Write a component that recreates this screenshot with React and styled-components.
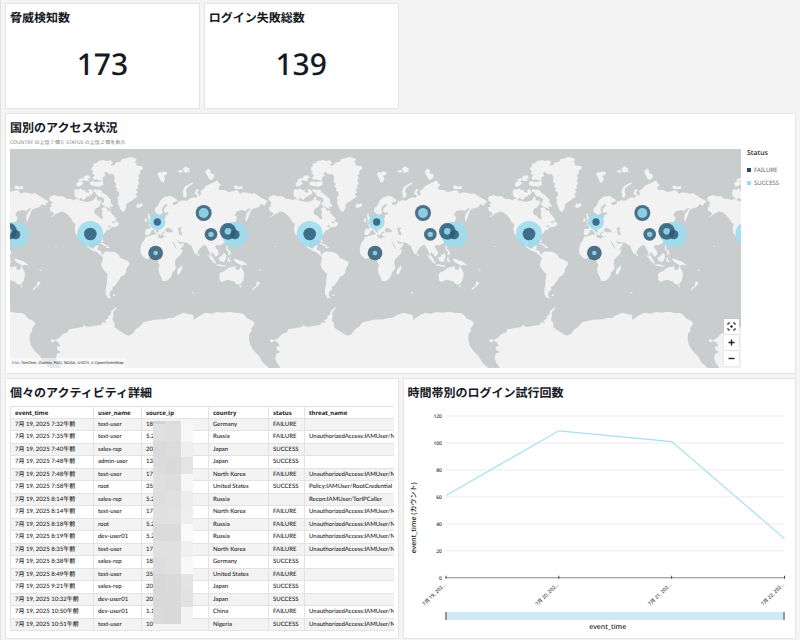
import React from 'react';
import styled, { createGlobalStyle } from 'styled-components';

const GlobalStyle = createGlobalStyle`
  * {
    box-sizing: border-box;
  }

  body {
    margin: 0;
    background: #f4f4f4;
    color: #16191f;
    font-family: 'Noto Sans', 'Noto Sans CJK JP', sans-serif;
    text-rendering: geometricPrecision;
  }
`;

const Dashboard = styled.main`
  display: grid;
  grid-template-columns: repeat(4, minmax(0, 1fr));
  gap: 4px;
  padding: 3px 4px 3px 4px;
  border-left: 1px solid #e2e2e2;
`;

const Panel = styled.section`
  grid-column: span ${(props) => props.$span};
  min-height: ${(props) => props.$height}px;
  padding: 4px 4px 5px;
  border: 1px solid #e4e4e4;
  background: #fff;
`;

const Title = styled.h2`
  margin: 0;
  font-family: 'Noto Sans CJK JP', sans-serif;
  font-size: 12px;
  font-weight: 700;
  line-height: 20px;
  white-space: nowrap;
`;

const Subtitle = styled.p`
  margin: 0 0 1px;
  color: #777;
  font-size: 5px;
  line-height: 10px;
`;

const KpiValue = styled.p`
  margin: 16px 0 0;
  font-size: 30px;
  font-weight: 500;
  line-height: 40px;
  text-align: center;
`;

const MapRow = styled.div`
  display: flex;
`;

const MapFrame = styled.div`
  position: relative;
  flex: 1;
  min-width: 0;
  height: 219px;
  overflow: hidden;
  background: #c9cdce;
`;

const MapSvg = styled.svg`
  display: block;
  width: 100%;
  height: 100%;
`;

const MapControls = styled.div`
  position: absolute;
  right: 2px;
  bottom: 2px;
  display: grid;
  gap: 1px;
`;

const MapButton = styled.button`
  display: grid;
  place-items: center;
  width: 15px;
  height: 15px;
  padding: 0;
  border: 0;
  background: #fff;
  box-shadow: 0 0 1px #bbb;
  color: #222;
`;

const Attribution = styled.div`
  position: absolute;
  left: 0;
  bottom: 0;
  padding: 0 2px;
  background: rgba(255, 255, 255, 0.5);
  color: #222;
  font-family: 'Liberation Sans', sans-serif;
  font-size: 4px;
  line-height: 10px;

  a {
    color: #0079c1;
    text-decoration: none;
  }
`;

const Legend = styled.div`
  width: 50px;
  padding-left: 6px;
  color: #666;
  font-size: 6px;

  h3 {
    margin: 0 0 5px;
    color: #222;
    font-size: 7px;
    font-weight: 500;
    line-height: 9px;
  }

  ul {
    margin: 0;
    padding: 0;
    list-style: none;
  }

  li {
    display: flex;
    align-items: center;
    gap: 3px;
    height: 13px;
  }
`;

const Swatch = styled.span`
  width: 4px;
  height: 4px;
  background: ${(props) => props.$color};
`;

const TableFrame = styled.div`
  position: relative;
  margin-top: 3px;
  overflow: hidden;
`;

const ActivityTable = styled.table`
  width: 100%;
  border-collapse: collapse;
  table-layout: fixed;
  color: #222;
  font-family: Lato, 'Noto Sans CJK JP', sans-serif;
  font-size: 6px;
  font-weight: 500;
  line-height: 8px;

  th,
  td {
    height: 12px;
    padding: 0 0 0 4px;
    overflow: hidden;
    border: 1px solid #e3e3e3;
    border-right: 0;
    text-align: left;
    white-space: nowrap;
  }

  th {
    font-family: 'Noto Sans', sans-serif;
    font-weight: 700;
  }

  tbody tr:nth-child(odd) {
    background: #f3f3f3;
  }

  tbody tr:nth-child(even) td {
    height: 13px;
  }
`;

const Mosaic = styled.div`
  position: absolute;
  top: 15px;
  left: 143px;
  display: grid;
  grid-template-columns: 12px 16px 12px;
  grid-template-rows: 3px repeat(12, 1fr);
  width: 40px;
  height: 203px;
`;

const MosaicCell = styled.span`
  background: ${(props) => props.$color};
`;

const ChartSvg = styled.svg`
  display: block;
  width: 100%;
`;

const RangeBar = styled.div`
  display: flex;
  justify-content: space-between;
  height: 8px;
  margin: 4px 6px 0 37px;
  background: #cfe8f3;
`;

const RangeHandle = styled.button`
  width: 2px;
  height: 8px;
  padding: 0;
  border: 1px solid #8b9aa1;
  background: #cfe8f3;
`;

const AxisTitle = styled.p`
  margin: 3px 6px 0 23px;
  color: #222;
  font-size: 7px;
  font-weight: 500;
  line-height: 10px;
  text-align: center;
`;

const FAILURE = '#2d5a76';
const SUCCESS = '#9adcf0';

// one world copy, repeated every WORLD units along the map
const WORLD = 658;

const land = [
  // north america
  'M150 183L147 176L153 170L165 166L174 170L190 170L198 177L212 178L221 182L228 177L238 182L250 185L262 187L274 184L282 180L285 172L290 171L291 180L298 184L304 182L303 192L296 194L298 202L288 206L283 213L284 223L293 228L301 236L306 240L309 232L306 224L308 214L304 207L312 202L319 205L324 214L330 212L335 222L344 231L350 239L342 246L335 246L338 251L348 251L355 256L349 261L340 262L334 263L327 270L319 272L314 280L309 287L307 294L310 308L306 308L300 300L288 301L274 302L267 310L270 323L280 327L286 318L295 317L292 331L302 333L305 344L313 348L307 351L298 344L291 338L275 331L258 320L247 303L238 293L244 308L239 304L232 288L226 279L224 266L227 253L219 248L214 237L204 225L193 218L183 215L176 220L168 222L159 230L150 234L163 223L158 218L150 213L149 203L157 199L151 194L158 189Z',
  // south america
  'M306 349L311 341L319 335L328 336L340 336L347 339L356 345L361 354L371 359L379 362L388 368L387 376L380 386L378 398L372 407L362 411L358 420L350 430L345 438L337 442L338 450L331 455L328 466L331 473L336 476L324 475L317 464L317 449L320 436L321 418L323 402L314 395L307 384L303 374L307 364L309 356Z',
  // greenland
  'M322 90L331 83L328 79L343 76L349 68L361 66L366 58L380 56L388 52L401 54L410 59L404 68L411 70L407 76L418 79L426 79L430 86L421 92L420 102L414 108L419 115L414 121L418 132L412 139L416 145L408 151L414 158L406 163L412 171L402 177L394 184L386 188L379 194L378 204L374 214L368 217L361 209L357 199L353 189L355 180L352 174L358 167L357 157L349 153L352 146L345 140L350 133L343 127L344 112L340 104L327 104L320 98Z',
  // ellesmere and the arctic islands
  'M276 83L282 78L278 73L289 70L296 64L310 61L320 64L332 62L338 69L332 76L336 83L325 87L319 97L312 100L317 108L308 113L309 123L297 122L288 118L285 122L278 116L284 107L275 101L281 94L274 91Z',
  'M270 128L278 124L286 127L309 125L310 135L298 141L282 139L272 137Z',
  'M254 108L266 107L271 114L263 119L269 124L257 124L248 120Z',
  'M228 132L237 124L247 126L250 132L241 139L232 141Z',
  'M236 119L247 115L252 121L244 125L236 123Z',
  'M223 154L226 148L235 150L243 146L248 152L257 150L255 157L266 159L269 170L260 171L252 181L243 174L235 181L229 173L223 169Z',
  'M266 148L275 150L279 158L273 168L267 163Z',
  'M279 150L290 148L288 156L281 158Z',
  'M285 155L297 149L305 153L308 159L318 165L325 172L333 180L331 187L338 195L339 202L329 200L332 209L320 203L313 200L304 192L311 188L313 178L304 172L294 170L289 164Z',
  'M284 191L290 187L299 190L301 198L293 201L286 198Z',
  // iceland, newfoundland, antilles, hawaii
  'M408 198L413 196L410 191L418 193L426 190L429 197L423 202L414 205L409 202Z',
  'M343 251L347 243L350 247L357 249L355 256L347 255Z',
  'M296 311L307 310L319 316L326 320L313 318L306 314Z',
  'M316 321L324 320L330 324L321 326Z',
  'M167 318L170 319L169 322L166 321Z',
  'M340 464L347 465L343 469L338 468Z',
  // africa
  'M437 292L449 288L468 284L474 286L474 292L485 297L492 292L512 294L517 299L515 303L521 312L527 323L535 332L549 329L544 343L534 352L526 361L525 373L528 384L523 393L517 398L516 406L509 417L500 424L487 424L484 413L478 402L475 388L479 375L474 367L473 358L465 355L453 355L439 358L431 353L422 341L421 332L423 318L428 307L433 301Z',
  'M534 388L541 383L544 376L547 384L541 399L535 405L531 400Z',
  // europe, asia
  'M436 286L435 278L438 267L450 268L451 260L445 256L449 253L457 250L463 242L469 239L469 228L475 227L474 234L484 238L496 236L497 226L506 224L504 218L496 219L491 215L493 206L503 196L498 192L488 203L485 212L489 218L483 224L480 232L475 227L469 219L464 216L465 206L474 198L480 183L492 173L503 170L512 168L524 176L532 181L529 186L519 188L518 194L525 197L533 192L537 181L540 187L546 182L561 183L571 176L580 173L590 174L592 167L584 163L587 153L592 147L597 151L592 158L598 169L604 164L601 153L610 149L617 139L631 132L645 126L653 122L656 130L663 135L655 145L660 151L674 151L686 157L701 154L709 151L717 156L719 163L730 158L745 160L755 163L762 160L771 165L784 174L799 182L804 187L797 190L794 198L783 193L778 201L770 204L757 208L752 213L748 225L740 245L736 235L741 220L753 205L743 207L738 214L725 211L711 215L704 225L711 234L706 248L697 258L688 263L694 274L689 280L684 273L679 271L681 279L686 286L683 300L673 309L661 317L650 316L645 321L654 333L657 342L648 352L642 344L635 336L633 345L640 354L646 366L639 361L631 350L628 336L622 325L617 317L610 317L600 326L594 335L592 343L586 344L579 332L575 318L568 315L560 309L545 308L534 304L540 312L551 311L552 316L540 330L519 339L515 331L506 315L500 299L501 292L491 290L486 282L495 279L491 275L486 280L481 288L476 281L477 273L466 267L468 275L479 283L473 286L467 279L461 271L455 271L452 279L446 286Z',
  'M443 222L449 222L447 229L453 235L458 247L441 251L448 243L445 237Z',
  'M434 238L441 236L441 245L434 247Z',
  'M472 103L479 96L484 99L491 95L502 98L499 106L490 108L496 117L490 129L483 126L478 114Z',
  'M534 94L543 91L550 94L545 99L536 98Z',
  'M548 88L556 80L570 87L566 92L571 98L560 97L556 101Z',
  'M550 173L550 162L548 155L554 141L566 134L579 128L578 133L567 139L559 147L558 156L561 164L558 174Z',
  'M617 93L626 86L632 94L631 101L642 104L643 113L634 121L627 119L623 108L618 103Z',
  'M700 141L707 137L716 141L727 139L728 147L712 149L704 147Z',
  'M739 222L744 218L745 230L740 246L737 243Z',
  'M592 343L598 343L597 349L594 349Z',
  // south east asia, oceania
  'M620 343L629 349L637 357L647 366L649 373L641 369L630 356Z',
  'M646 375L658 374L671 377L680 378L676 381L656 379Z',
  'M655 355L664 350L672 340L679 346L677 358L672 367L661 365Z',
  'M683 355L697 351L687 356L693 368L688 368L685 362L682 371Z',
  'M678 318L683 318L682 327L690 333L693 344L684 346L686 336L679 330Z',
  'M700 357L710 358L717 362L729 365L739 373L743 378L731 375L724 378L717 373L709 369L703 363Z',
  'M658 405L661 399L673 394L686 384L699 381L708 380L706 387L715 392L720 386L722 378L728 390L733 399L732 411L729 423L720 435L709 433L701 424L696 425L688 420L678 422L666 427L659 422Z',
  'M718 438L725 437L722 444Z',
  'M771 425L777 427L780 431L773 438L760 450L756 453L758 446L768 438Z',
  'M777 388L784 392L782 394L776 390Z',
  'M575 457L582 458L581 461L576 460Z',
  // antarctica
  'M184 686L172 668L168 656L171 642L183 637L173 631L170 622L181 618L174 607L164 603L158 609L151 603L156 598L164 602L178 594L188 583L203 578L206 569L226 566L248 562L251 556L264 562L285 558L303 556L307 548L319 549L315 541L325 537L324 529L332 525L334 514L350 501L348 509L339 517L340 530L337 541L344 550L344 563L356 572L374 583L385 588L398 582L407 569L418 562L430 548L446 544L464 540L491 539L507 535L521 534L533 526L552 519L564 523L580 526L581 541L590 534L604 525L617 519L635 522L651 517L669 519L690 516L708 520L724 520L734 526L741 536L757 543L764 551L760 559L754 566L755 574L748 582L747 600L751 617L762 634L778 650L788 668L808 686Z',
];

const lakes = [
  'M495 270L503 264L509 266L519 273L516 278L500 278Z',
  'M534 265L542 263L546 266L540 271L546 279L545 287L538 285L536 276Z',
  'M516 305L520 307L531 328L526 325Z',
  'M529 299L534 304L541 312L536 310Z',
  'M323 260L328 257L333 260L327 263Z',
];

// each layer is a radius and a colour, outer circle first
const markers = [
  { x: 271, y: 283, layers: [[39, SUCCESS], [19, FAILURE]] },
  { x: 472, y: 247, layers: [[24, SUCCESS], [11, FAILURE]] },
  { x: 611, y: 220, layers: [[24, FAILURE], [15, SUCCESS]] },
  { x: 633, y: 284, layers: [[19, FAILURE], [8, SUCCESS]] },
  { x: 467, y: 340, layers: [[22, FAILURE], [7, SUCCESS]] },
  { x: 705, y: 285, layers: [[39, SUCCESS]] },
  { x: 684, y: 275, layers: [[25, FAILURE], [10, SUCCESS]] },
  { x: 705, y: 285, layers: [[14, FAILURE]] },
];

const worlds = [-1, 0, 1, 2, 3];

const THREAT = 'UnauthorizedAccess:IAMUser/M';

const columns = [
  ['event_time', 83],
  ['user_name', 48],
  ['source_ip', 67],
  ['country', 60],
  ['status', 36],
  ['threat_name', 89],
];

const rows = [
  ['7:32', 'test-user', '18', 'Germany', 'FAILURE', ''],
  ['7:35', 'test-user', '5.2', 'Russia', 'FAILURE', THREAT],
  ['7:40', 'sales-rep', '20', 'Japan', 'SUCCESS', ''],
  ['7:48', 'admin-user', '13.', 'Japan', 'SUCCESS', ''],
  ['7:48', 'test-user', '17', 'North Korea', 'FAILURE', THREAT],
  ['7:58', 'root', '35.', 'United States', 'SUCCESS', 'Policy:IAMUser/RootCredential'],
  ['8:14', 'sales-rep', '5.2', 'Russia', '', 'Recon:IAMUser/TorIPCaller'],
  ['8:14', 'test-user', '17', 'North Korea', 'FAILURE', THREAT],
  ['8:18', 'root', '5.2', 'Russia', 'FAILURE', THREAT],
  ['8:19', 'dev-user01', '5.2', 'Russia', 'FAILURE', THREAT],
  ['8:35', 'test-user', '17', 'North Korea', 'FAILURE', THREAT],
  ['8:38', 'sales-rep', '18', 'Germany', 'SUCCESS', ''],
  ['8:49', 'test-user', '35.', 'United States', 'FAILURE', ''],
  ['9:21', 'sales-rep', '20', 'Japan', 'SUCCESS', ''],
  ['10:32', 'dev-user01', '20', 'Japan', 'SUCCESS', ''],
  ['10:50', 'dev-user01', '1.1', 'China', 'FAILURE', THREAT],
  ['10:51', 'test-user', '10', 'Nigeria', 'SUCCESS', THREAT],
];

const mosaic = [
  ['#d2d2d2', '#dcdcdc', '#f6f6f6'],
  ['#e0e0e0', '#dfdfdf', '#f8f8f8'],
  ['#dadada', '#dcdcdc', '#efefef'],
  ['#dcdcdc', '#dadada', '#e4e4e4'],
  ['#dfdfdf', '#dddddd', '#f6f6f6'],
  ['#dedede', '#e0e0e0', '#ededed'],
  ['#e0e0e0', '#e1e1e1', '#eeeeee'],
  ['#dadada', '#dbdbdb', '#fafafa'],
  ['#e0e0e0', '#e0e0e0', '#f0f0f0'],
  ['#dddddd', '#e0e0e0', '#f8f8f8'],
  ['#d8d8d8', '#dadada', '#e3e3e3'],
  ['#d9d9d9', '#dadada', '#e1e1e1'],
  ['#dbdbdb', '#d9d9d9', '#f4f4f4'],
];

const ticks = [0, 20, 40, 60, 80, 100, 120];
const attempts = [
  ['7月 19, 202...', 61],
  ['7月 20, 202...', 109],
  ['7月 21, 202...', 101],
  ['7月 22, 202...', 29],
];
const chartX = (index) => 38 + index * 113;
const chartY = (value) => 175 - value * 1.35;

function WorldMap() {
  return (
    <MapSvg viewBox="30 28 2193 657" preserveAspectRatio="xMinYMin slice">
      <defs>
        <g id="world">
          <path d={land.join('')} fill="#f2f2f2" />
          <path d={lakes.join('')} fill="#c9cdce" />
        </g>
      </defs>
      {worlds.map((n) => (
        <use key={n} href="#world" x={n * WORLD} />
      ))}
      {worlds.map((n) =>
        markers.map((marker, i) =>
          marker.layers.map(([r, fill]) => (
            <circle
              key={`${n}-${i}-${r}`}
              cx={marker.x + n * WORLD}
              cy={marker.y}
              r={r}
              fill={fill}
              opacity="0.85"
            />
          ))
        )
      )}
    </MapSvg>
  );
}

function AttemptsChart() {
  const points = attempts.map(([, value], i) => `${chartX(i)},${chartY(value)}`);

  return (
    <ChartSvg viewBox="0 0 384 205">
      {ticks.map((tick) => (
        <g key={tick}>
          <path
            d={`M38 ${chartY(tick)}H377`}
            stroke={tick === 0 ? '#888' : '#ececec'}
            strokeWidth="1"
          />
          <text
            x="34"
            y={chartY(tick) + 2}
            fontSize="5"
            fontWeight="500"
            fill="#222"
            textAnchor="end"
          >
            {tick}
          </text>
        </g>
      ))}
      {attempts.map(([label], i) => (
        <g key={label}>
          <path d={`M${chartX(i)} 173V176`} stroke="#444" />
          <text
            fontSize="5"
            fontWeight="500"
            fill="#333"
            textAnchor="end"
            transform={`translate(${chartX(i)} 182) rotate(-45)`}
          >
            {label}
          </text>
        </g>
      ))}
      <polyline points={points.join(' ')} fill="none" stroke="#a9def2" strokeWidth="1.2" />
      <text
        fontSize="7"
        fontWeight="500"
        fill="#222"
        textAnchor="middle"
        transform="translate(8 115) rotate(-90)"
      >
        event_time (カウント)
      </text>
    </ChartSvg>
  );
}

function App() {
  return (
    <>
      <GlobalStyle />
      <Dashboard>
        <Panel $span={1} $height={106}>
          <Title>脅威検知数</Title>
          <KpiValue>173</KpiValue>
        </Panel>
        <Panel $span={1} $height={106}>
          <Title>ログイン失敗総数</Title>
          <KpiValue>139</KpiValue>
        </Panel>

        <Panel $span={4} $height={261}>
          <Title>国別のアクセス状況</Title>
          <Subtitle>COUNTRY の上位 7 個と STATUS の上位 2 個を表示</Subtitle>
          <MapRow>
            <MapFrame>
              <WorldMap />
              <Attribution>
                <a href="https://www.esri.com">Esri</a>, TomTom, Garmin, FAO, NOAA, USGS, ©
                OpenStreetMap
              </Attribution>
              <MapControls>
                <MapButton type="button" aria-label="Fit to data">
                  <svg width="9" height="9" viewBox="0 0 9 9" fill="none" stroke="currentColor">
                    <path d="M1 3V1H3M6 1H8V3M8 6V8H6M3 8H1V6" />
                    <circle cx="4.5" cy="4.5" r="1.2" fill="currentColor" stroke="none" />
                  </svg>
                </MapButton>
                <MapButton type="button" aria-label="Zoom in">
                  <svg width="7" height="7" viewBox="0 0 7 7" stroke="currentColor">
                    <path d="M0.5 3.5H6.5M3.5 0.5V6.5" strokeWidth="1.4" />
                  </svg>
                </MapButton>
                <MapButton type="button" aria-label="Zoom out">
                  <svg width="7" height="7" viewBox="0 0 7 7" stroke="currentColor">
                    <path d="M0.5 3.5H6.5" strokeWidth="1.4" />
                  </svg>
                </MapButton>
              </MapControls>
            </MapFrame>
            <Legend>
              <h3>Status</h3>
              <ul>
                <li>
                  <Swatch $color="#1f4e69" />
                  FAILURE
                </li>
                <li>
                  <Swatch $color={SUCCESS} />
                  SUCCESS
                </li>
              </ul>
            </Legend>
          </MapRow>
        </Panel>

        <Panel $span={2} $height={259}>
          <Title>個々のアクティビティ詳細</Title>
          <TableFrame>
            <ActivityTable>
              <colgroup>
                {columns.map(([name, width]) => (
                  <col key={name} width={width} />
                ))}
              </colgroup>
              <thead>
                <tr>
                  {columns.map(([name]) => (
                    <th key={name} scope="col">
                      {name}
                    </th>
                  ))}
                </tr>
              </thead>
              <tbody>
                {rows.map(([time, ...cells], i) => (
                  <tr key={i}>
                    <td>7月 19, 2025 {time}午前</td>
                    {cells.map((cell, j) => (
                      <td key={j}>{cell}</td>
                    ))}
                  </tr>
                ))}
              </tbody>
            </ActivityTable>
            <Mosaic>
              {mosaic.flat().map((color, i) => (
                <MosaicCell key={i} $color={color} />
              ))}
            </Mosaic>
          </TableFrame>
        </Panel>

        <Panel $span={2} $height={259}>
          <Title>時間帯別のログイン試行回数</Title>
          <AttemptsChart />
          <RangeBar>
            <RangeHandle type="button" aria-label="Range start" />
            <RangeHandle type="button" aria-label="Range end" />
          </RangeBar>
          <AxisTitle>event_time</AxisTitle>
        </Panel>
      </Dashboard>
    </>
  );
}

export default App;
